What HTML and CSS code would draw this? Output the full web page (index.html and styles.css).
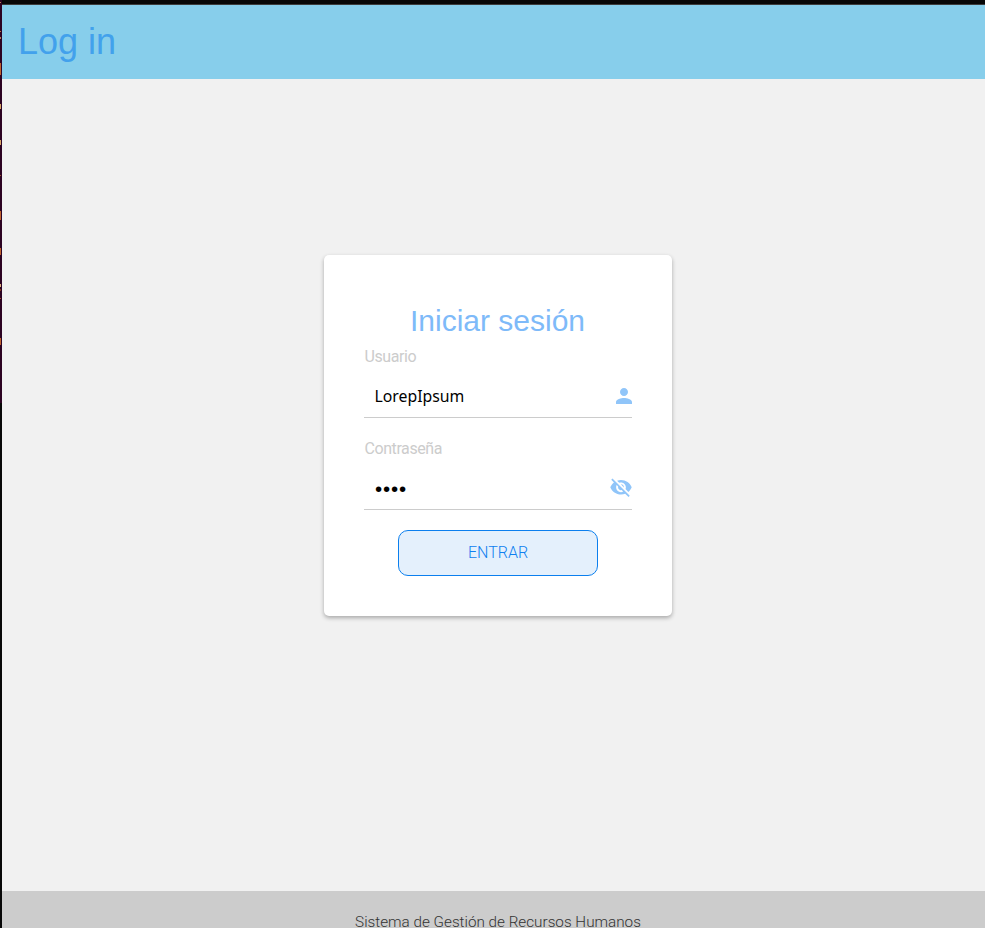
FILE: index.html
```html
<!DOCTYPE html>
<html lang="es">
<head>
<meta charset="utf-8">
<title>Log in</title>
<link rel="stylesheet" href="styles.css">
</head>
<body>
<div class="edge"></div>
<div class="page">
  <div class="topline"></div>
  <header class="header"><h1 class="brand">Log in</h1></header>
  <main class="main">
    <form class="card">
      <h2 class="title">Iniciar sesión</h2>
      <label class="label" for="user">Usuario</label>
      <div class="field field-user">
        <input class="input" id="user" type="text" value="LorepIpsum">
        <svg class="icon-user" viewBox="4 4 16 16"><path d="M12 12c2.21 0 4-1.79 4-4s-1.79-4-4-4-4 1.79-4 4 1.79 4 4 4zm0 2c-2.67 0-8 1.34-8 4v2h16v-2c0-2.66-5.33-4-8-4z"/></svg>
      </div>
      <label class="label label-second">Contraseña</label>
      <div class="field">
        <span class="password">••••</span>
        <svg class="icon-eye" viewBox="1 2.5 22 19.5"><path d="M12 7c2.76 0 5 2.24 5 5 0 .65-.13 1.26-.36 1.83l2.92 2.92c1.51-1.26 2.7-2.89 3.43-4.75-1.73-4.39-6-7.5-11-7.5-1.4 0-2.74.25-3.98.7l2.16 2.16C10.74 7.13 11.35 7 12 7zM2 4.27l2.28 2.28.46.46C3.08 8.3 1.78 10.02 1 12c1.73 4.39 6 7.5 11 7.5 1.55 0 3.03-.3 4.38-.84l.42.42L19.73 22 21 20.73 3.27 3 2 4.27zM7.53 9.8l1.55 1.55c-.05.21-.08.43-.08.65 0 1.66 1.34 3 3 3 .22 0 .44-.03.65-.08l1.55 1.55c-.67.33-1.41.53-2.2.53-2.76 0-5-2.24-5-5 0-.79.2-1.53.53-2.2zm4.31-.78l3.15 3.15.02-.16c0-1.66-1.34-3-3-3l-.17.01z"/></svg>
      </div>
      <button class="submit" type="button">ENTRAR</button>
    </form>
  </main>
  <footer class="footer">Sistema de Gestión de Recursos Humanos</footer>
</div>
</body>
</html>
```
FILE: styles.css
```css
* { box-sizing: border-box; }
body {
  margin: 0;
  height: 928px;
  display: flex;
  background: #f1f1f1;
  font-family: Roboto, "Liberation Sans", sans-serif;
  font-weight: 300;
}
.edge {
  width: 2px;
  background:
    linear-gradient(#c0622f, #c0622f) 0 63px / 1px 12px no-repeat,
    linear-gradient(#b08058, #b08058) 0 2px / 1px 1px no-repeat,
    linear-gradient(#c07840, #c07840) 0 31px / 1px 1px no-repeat,
    linear-gradient(#b08058, #b08058) 0 37px / 1px 2px no-repeat,
    linear-gradient(#d9a566, #d9a566) 0 104px / 1px 5px no-repeat,
    linear-gradient(#d9a566, #d9a566) 0 140px / 1px 5px no-repeat,
    linear-gradient(#a05030, #a05030) 0 175px / 1px 1px no-repeat,
    linear-gradient(#c0622f, #c0622f) 0 211px / 1px 9px no-repeat,
    linear-gradient(#c0622f, #c0622f) 0 248px / 1px 7px no-repeat,
    linear-gradient(#e0b080, #e0b080) 0 284px / 1px 3px no-repeat,
    linear-gradient(#803820, #803820) 0 289px / 1px 2px no-repeat,
    linear-gradient(#a05030, #a05030) 0 298px / 1px 1px no-repeat,
    linear-gradient(#c0622f, #c0622f) 0 338px / 1px 7px no-repeat,
    linear-gradient(#2c0322 403px, #080808 403px);
}
.page { flex: 1; display: flex; flex-direction: column; }
.topline { height: 5px; background: #070707; border-bottom: 1px solid #3c3c3c; }
.header {
  height: 74px;
  padding: 0 16px;
  display: flex;
  align-items: center;
  background: #87ceeb;
}
.brand {
  margin: 0;
  font: 400 36px/42px "Liberation Sans", sans-serif;
  color: #42a1ec;
}
.main {
  height: 812px;
  padding: 176px 0 0 8px;
  display: flex;
  justify-content: center;
  align-items: flex-start;
}
.card {
  width: 348px;
  height: 361px;
  padding: 48px 40px 40px;
  border-radius: 5px;
  background: #fff;
  box-shadow: 0 2px 4px rgba(0, 0, 0, .3);
  display: flex;
  flex-direction: column;
}
.title {
  margin: 0;
  font: 400 30px/36px "Liberation Sans", sans-serif;
  text-align: center;
  color: #7ebaf9;
}
.label {
  margin-top: 8px;
  padding-left: 1px;
  font-size: 16px;
  font-weight: 400;
  line-height: 20px;
  letter-spacing: -.42px;
  color: #ccc;
}
.label-second { margin-top: 21px; }
.field {
  height: 52px;
  display: flex;
  align-items: center;
  justify-content: space-between;
  border-bottom: 1px solid #ccc;
}
.field-user { height: 51px; }
.input {
  width: 230px;
  height: 40px;
  margin-top: 9px;
  padding: 0 11px;
  border: 0;
  background: transparent;
  font: 400 15.8px "Noto Sans", sans-serif;
  color: #000;
}
.password { padding-left: 11.5px; margin-top: 11px; font: 400 20.5px/24px "Liberation Sans", sans-serif; letter-spacing: .83px; }
.icon-user, .icon-eye { fill: #90c5f9; flex: none; }
.icon-user { width: 16px; height: 16px; margin-top: 8px; }
.icon-eye { width: 22px; height: 19px; margin-top: 8px; }
.submit {
  width: 200px;
  height: 46px;
  margin: 20px auto 0;
  padding: 0 0 2px 1px;
  border: 1px solid #0b7fee;
  border-radius: 10px;
  background: #e4f0fc;
  font: 300 16px Roboto, sans-serif;
  color: #0f80f0;
}
.footer {
  height: 37px;
  padding: 25px 0 0 9px;
  background: #ccc;
  white-space: nowrap;
  text-align: center;
  font-size: 15.25px;
  line-height: 12px;
  color: #333;
}
```
